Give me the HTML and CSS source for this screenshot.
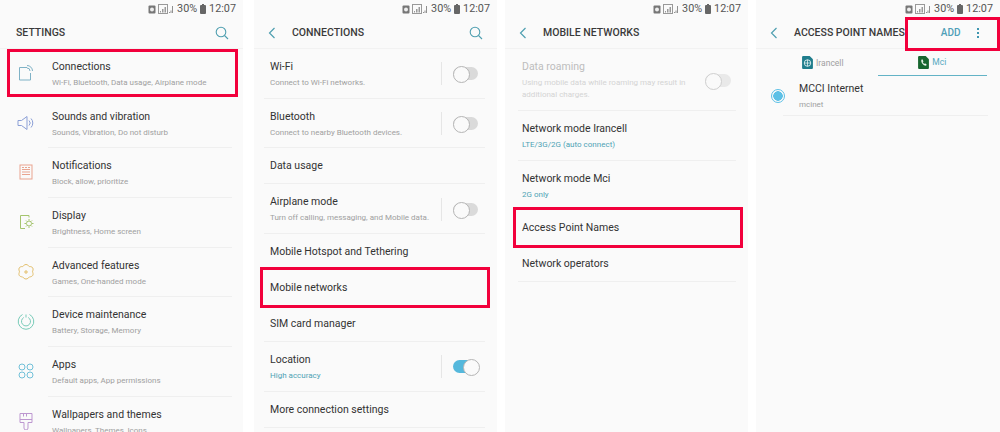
FILE: index.html
```html
<!DOCTYPE html>
<html lang="en">
<head>
  <meta charset="UTF-8">
  <title>Access point settings</title>
  <link rel="stylesheet" href="styles.css">
</head>
<body>

  <svg class="defs" width="0" height="0">
    <symbol id="status" viewBox="0 0 26 10">
      <rect x="0.5" y="1.5" width="7" height="8" rx="1" fill="#777"/>
      <circle cx="4" cy="5.500" r="2" fill="#eee"/>
      <rect x="10.500" y="0.500" width="9" height="9" fill="none" stroke="#999"/>
      <path d="M12 8.500h1V7h-1zM14 8.500h1.500V5H14zM16.500 8.500H18V3h-1.500z" fill="#999"/>
      <path d="M21 9h.8V8H21zM22.600 9h.8V6.500h-.8zM24.200 9h.8V2h-.8z" fill="#777"/>
    </symbol>
    <symbol id="battery" viewBox="0 0 6 10">
      <rect x="0" y="1" width="6" height="9" rx="1" fill="#666"/>
      <rect x="2" y="0" width="2" height="1" fill="#666"/>
    </symbol>
    <symbol id="search" viewBox="0 0 14 14">
      <circle cx="6" cy="6" r="4.800" fill="none" stroke="#4f9fb0" stroke-width="1.100"/>
      <path d="M9.500 9.500L13 13" stroke="#4f9fb0" stroke-width="1.100" fill="none"/>
    </symbol>
    <symbol id="back" viewBox="0 0 8 12">
      <path d="M6.500 1L1.500 6l5 5" stroke="#4f9fb0" stroke-width="1.200" fill="none"/>
    </symbol>
  </svg>

  <div class="screens">

    <section class="phone">
      <div class="statusbar"><svg class="st-icons"><use href="#status"/></svg><span>30%</span><svg class="st-batt"><use href="#battery"/></svg><span>12:07</span></div>
      <header class="appbar appbar-main">
        <h2>SETTINGS</h2>
        <svg class="search"><use href="#search"/></svg>
      </header>
      <ul class="list list-icons">
        <li class="row two nosep">
          <svg class="row-icon" viewBox="0 0 18 18" fill="none" stroke="#7fb2c6" stroke-width="1"><path d="M10 3.500H2.500V16h11V9"/><path d="M10 1.500a5.500 5.500 0 0 1 5.500 5.500M10 4a3 3 0 0 1 3 3"/></svg>
          <div><p class="title">Connections</p><p class="sub">Wi-Fi, Bluetooth, Data usage, Airplane mode</p></div>
        </li>
        <li class="row two">
          <svg class="row-icon" viewBox="0 0 18 18" fill="none" stroke="#8b9fd6" stroke-width="1"><path d="M1 6.500h3.500L10 2.500v13l-5.500-4H1z"/><path d="M12 6.500a3.500 3.500 0 0 1 0 5M14 4.500a6.500 6.500 0 0 1 0 9"/></svg>
          <div><p class="title">Sounds and vibration</p><p class="sub">Sounds, Vibration, Do not disturb</p></div>
        </li>
        <li class="row two">
          <svg class="row-icon" viewBox="0 0 18 18" fill="none" stroke="#e9a48f" stroke-width="1"><rect x="3" y="2" width="12" height="14"/><path d="M5 4.500h2M8 4.500h2M11 4.500h2M5 6.500h8M5 9h8M5 11.500h8"/></svg>
          <div><p class="title">Notifications</p><p class="sub">Block, allow, prioritize</p></div>
        </li>
        <li class="row two">
          <svg class="row-icon" viewBox="0 0 18 18" fill="none" stroke="#a5c46e" stroke-width="1"><path d="M12 2.500H3.500v13H8M12 2.500v2"/><circle cx="12" cy="10.500" r="2.500"/><path d="M12 6v1.500M12 13.500V15M7.500 10.500H9M15 10.500h1.500M9 7.500l1 1M14 12.500l1 1M15 7.500l-1 1M10 12.500l-1 1"/></svg>
          <div><p class="title">Display</p><p class="sub">Brightness, Home screen</p></div>
        </li>
        <li class="row two">
          <svg class="row-icon" viewBox="0 0 18 18" fill="none" stroke="#e3bf6c" stroke-width="1"><path d="M9 1.500c1.500 0 2.500 1.300 3.300 2 1.200 0 2.800.2 3.500 1.500.7 1.300 0 2.700-.3 3.800.3 1 1 2.200.3 3.500s-2.300 1.500-3.500 1.700c-.8.800-1.800 2-3.300 2s-2.500-1.200-3.300-2c-1.200-.2-2.800-.4-3.500-1.700s0-2.500.3-3.500c-.3-1.100-1-2.500-.3-3.800.7-1.300 2.300-1.500 3.500-1.500.8-.7 1.800-2 3.300-2z"/><path d="M7 9h4M9 7v4"/></svg>
          <div><p class="title">Advanced features</p><p class="sub">Games, One-handed mode</p></div>
        </li>
        <li class="row two">
          <svg class="row-icon" viewBox="0 0 18 18" fill="none" stroke="#78cbb8" stroke-width="1"><path d="M5.500 2.500a7.800 7.800 0 1 0 7 0"/><path d="M6.800 5.500a4.500 4.500 0 1 0 4.400 0"/><path d="M9 2.500v3"/></svg>
          <div><p class="title">Device maintenance</p><p class="sub">Battery, Storage, Memory</p></div>
        </li>
        <li class="row two">
          <svg class="row-icon" viewBox="0 0 18 18" fill="none" stroke="#71c0d8" stroke-width="1"><circle cx="5" cy="5" r="3"/><circle cx="13" cy="5" r="3"/><circle cx="5" cy="13" r="3"/><circle cx="13" cy="13" r="3"/></svg>
          <div><p class="title">Apps</p><p class="sub">Default apps, App permissions</p></div>
        </li>
        <li class="row two">
          <svg class="row-icon" viewBox="0 0 18 18" fill="none" stroke="#bd97d0" stroke-width="1"><path d="M3 1.500h12v9H11v5.500a2 2 0 0 1-4 0v-5.500H3zM3 7.500h12M6.500 2v2.500M9.500 2v2.500"/></svg>
          <div><p class="title">Wallpapers and themes</p><p class="sub">Wallpapers, Themes, Icons</p></div>
        </li>
      </ul>
      <div class="mark mark-connections"></div>
    </section>

    <section class="phone">
      <div class="statusbar"><svg class="st-icons"><use href="#status"/></svg><span>30%</span><svg class="st-batt"><use href="#battery"/></svg><span>12:07</span></div>
      <header class="appbar">
        <svg class="back"><use href="#back"/></svg>
        <h2>CONNECTIONS</h2>
        <svg class="search"><use href="#search"/></svg>
      </header>
      <ul class="list">
        <li class="row two"><div><p class="title">Wi-Fi</p><p class="sub">Connect to Wi-Fi networks.</p></div><span class="switch"></span></li>
        <li class="row two"><div><p class="title">Bluetooth</p><p class="sub">Connect to nearby Bluetooth devices.</p></div><span class="switch"></span></li>
        <li class="row"><p class="title">Data usage</p></li>
        <li class="row two"><div><p class="title">Airplane mode</p><p class="sub">Turn off calling, messaging, and Mobile data.</p></div><span class="switch"></span></li>
        <li class="row"><p class="title">Mobile Hotspot and Tethering</p></li>
        <li class="row"><p class="title">Mobile networks</p></li>
        <li class="row"><p class="title">SIM card manager</p></li>
        <li class="row two"><div><p class="title">Location</p><p class="sub sub-teal">High accuracy</p></div><span class="switch on"></span></li>
        <li class="row"><p class="title">More connection settings</p></li>
      </ul>
      <div class="mark mark-mobile"></div>
    </section>

    <section class="phone">
      <div class="statusbar"><svg class="st-icons"><use href="#status"/></svg><span>30%</span><svg class="st-batt"><use href="#battery"/></svg><span>12:07</span></div>
      <header class="appbar">
        <svg class="back"><use href="#back"/></svg>
        <h2>MOBILE NETWORKS</h2>
      </header>
      <ul class="list list-networks">
        <li class="row three disabled"><div><p class="title">Data roaming</p><p class="sub">Using mobile data while roaming may result in additional charges.</p></div><span class="switch plain"></span></li>
        <li class="row two"><div><p class="title">Network mode Irancell</p><p class="sub sub-teal">LTE/3G/2G (auto connect)</p></div></li>
        <li class="row two"><div><p class="title">Network mode Mci</p><p class="sub sub-teal">2G only</p></div></li>
        <li class="row"><p class="title">Access Point Names</p></li>
        <li class="row"><p class="title">Network operators</p></li>
      </ul>
      <div class="mark mark-apn"></div>
    </section>

    <section class="phone">
      <div class="statusbar"><svg class="st-icons"><use href="#status"/></svg><span>30%</span><svg class="st-batt"><use href="#battery"/></svg><span>12:07</span></div>
      <header class="appbar appbar-apn">
        <svg class="back"><use href="#back"/></svg>
        <h2>ACCESS POINT NAMES</h2>
        <span class="add">ADD</span>
        <span class="more"><i></i><i></i><i></i></span>
      </header>
      <div class="tabs">
        <div class="tab">
          <svg class="sim" viewBox="0 0 10 12"><path d="M0 1a1 1 0 0 1 1-1h6l3 3v8a1 1 0 0 1-1 1H1a1 1 0 0 1-1-1z" fill="#1f7d8c"/><circle cx="5" cy="6.500" r="3" fill="none" stroke="#e8f4f5" stroke-width=".8"/><path d="M2 6.500h6M5 3.500v6" stroke="#e8f4f5" stroke-width=".7"/></svg>
          <span>Irancell</span>
        </div>
        <div class="tab tab-active">
          <svg class="sim" viewBox="0 0 10 12"><path d="M0 1a1 1 0 0 1 1-1h6l3 3v8a1 1 0 0 1-1 1H1a1 1 0 0 1-1-1z" fill="#17662f"/><path d="M3 3.500l1-.5 1 2-.8.6c.3.800.8 1.300 1.500 1.700l.7-.7 1.600 1.400-.7.900C5 9 2.500 6.500 3 3.500z" fill="#e8f4ea"/></svg>
          <span>Mci</span>
        </div>
      </div>
      <ul class="list">
        <li class="row two apn-row">
          <span class="radio"></span>
          <div><p class="title">MCCI Internet</p><p class="sub">mcinet</p></div>
        </li>
      </ul>
      <div class="mark mark-add"></div>
    </section>

  </div>

</body>
</html>
```

FILE: styles.css
```css
* {
  box-sizing: border-box;
}
body {
  margin: 0;
  background: #fff;
  font-family: Roboto, "Liberation Sans", sans-serif;
  color: #2c2c2c;
  overflow: hidden;
}
p, h2, ul {
  margin: 0;
  padding: 0;
}
ul {
  list-style: none;
}
.defs {
  position: absolute;
}
.screens {
  display: flex;
  height: 432px;
}
.phone {
  position: relative;
  flex: none;
  width: 243px;
  margin-right: 8px;
  background: #fafafa;
  overflow: hidden;
}
.phone:first-child {
  margin-right: 11px;
}
.phone:last-child {
  width: 244px;
  margin-right: 0;
}

/* status bar */
.statusbar {
  display: flex;
  justify-content: flex-end;
  align-items: center;
  gap: 3px;
  height: 17px;
  padding-right: 7px;
  font-size: 10.800px;
  color: #555;
}
.st-icons {
  width: 26px;
  height: 10px;
}
.st-batt {
  width: 6px;
  height: 10px;
}

/* header */
.appbar {
  display: flex;
  align-items: center;
  height: 32px;
  padding: 0 14px;
  border-bottom: 1px solid #f2f2f2;
}
.appbar h2 {
  flex: 1;
  font-size: 10.500px;
  font-weight: 500;
  color: #3a3a3a;
  white-space: nowrap;
}
.appbar-main {
  padding-left: 16px;
}
.back {
  width: 8px;
  height: 12px;
  margin-right: 16px;
}
.search {
  width: 14px;
  height: 14px;
}
.appbar-apn h2 {
  flex: none;
}
.add {
  margin-left: 36px;
  font-size: 10px;
  font-weight: 500;
  color: #4f9fb8;
}
.more {
  display: flex;
  flex-direction: column;
  gap: 2px;
  margin-left: 16px;
}
.more i {
  width: 2px;
  height: 2px;
  background: #3f96b0;
}

/* rows */
.row {
  display: flex;
  align-items: center;
  justify-content: space-between;
  height: 36px;
  padding: 0 16px;
  position: relative;
}
.row::after {
  content: "";
  position: absolute;
  left: 10px;
  right: 12px;
  bottom: 0;
  border-bottom: 1px solid #efefef;
}
.row.two {
  height: 49.700px;
}
.row.three {
  height: 62px;
}
.title {
  font-size: 10.500px;
  line-height: 14px;
  color: #333;
  white-space: nowrap;
}
.sub {
  margin-top: 3px;
  font-size: 8px;
  line-height: 11px;
  color: #a0a0a0;
  white-space: nowrap;
}
.sub-teal {
  color: #4fa3b5;
}
.list-icons .row {
  justify-content: flex-start;
  padding-left: 52px;
}
.list-icons .row::after {
  left: 48px;
  right: 11px;
}
.list-icons .nosep::after {
  border: 0;
}
.list-networks .row {
  padding-left: 17px;
}
.list-networks .row::after {
  left: 13px;
}
.row-icon {
  position: absolute;
  left: 17px;
  top: 15px;
  width: 18px;
  height: 18px;
}

/* disabled row */
.disabled .title {
  color: #bdbdbd;
}
.disabled .sub {
  white-space: normal;
  width: 170px;
  line-height: 12px;
  color: #d4d4d4;
}

/* switches */
.switch {
  position: relative;
  flex: none;
  width: 25px;
  height: 13px;
  margin-right: 3px;
  border-radius: 7px;
  background: #dadada;
}
.switch::before {
  content: "";
  position: absolute;
  left: 0;
  top: -1px;
  width: 15px;
  height: 15px;
  border-radius: 50%;
  background: #fafafa;
  border: 1px solid #b5b5b5;
}
.row.two .switch::after {
  content: "";
  position: absolute;
  left: -12px;
  top: -5px;
  height: 23px;
  border-left: 1px solid #e6e6e6;
}
.switch.plain {
  width: 26px;
  margin-right: 1px;
  background: #e9e9e9;
}
.switch.plain::before {
  border-color: #cfcfcf;
}
.switch.on {
  background: #55b8dc;
}
.switch.on::before {
  left: 10px;
}

/* tabs on the apn screen */
.tabs {
  display: flex;
  height: 27px;
  padding: 0 13px 0 12px;
}
.tab {
  flex: 1;
  display: flex;
  align-items: center;
  justify-content: center;
  gap: 3px;
  font-size: 8.500px;
  color: #a0a0a0;
}
.tab-active {
  color: #55a9bf;
  border-bottom: 1px solid #63b3c6;
}
.sim {
  width: 11px;
  height: 13px;
}
.row.apn-row {
  height: 40px;
  padding-left: 43px;
  justify-content: flex-start;
}
.apn-row::after {
  left: 27px;
}
.radio {
  position: absolute;
  left: 15px;
  top: 13px;
  width: 14px;
  height: 14px;
  border-radius: 50%;
  border: 1.500px solid #5cc0e6;
  background: radial-gradient(circle, #5cc0e6 4.500px, #fafafa 5px);
}

/* red highlight boxes drawn over the screenshots */
.mark {
  position: absolute;
  border: 3px solid #f2003c;
}
.mark-connections {
  left: 7px;
  top: 49px;
  width: 231px;
  height: 48px;
}
.mark-mobile {
  left: 6px;
  top: 267px;
  width: 230px;
  height: 41px;
}
.mark-apn {
  left: 8px;
  top: 207px;
  width: 230px;
  height: 41px;
}
.mark-add {
  left: 149px;
  top: 17px;
  width: 95px;
  height: 34px;
}
```
